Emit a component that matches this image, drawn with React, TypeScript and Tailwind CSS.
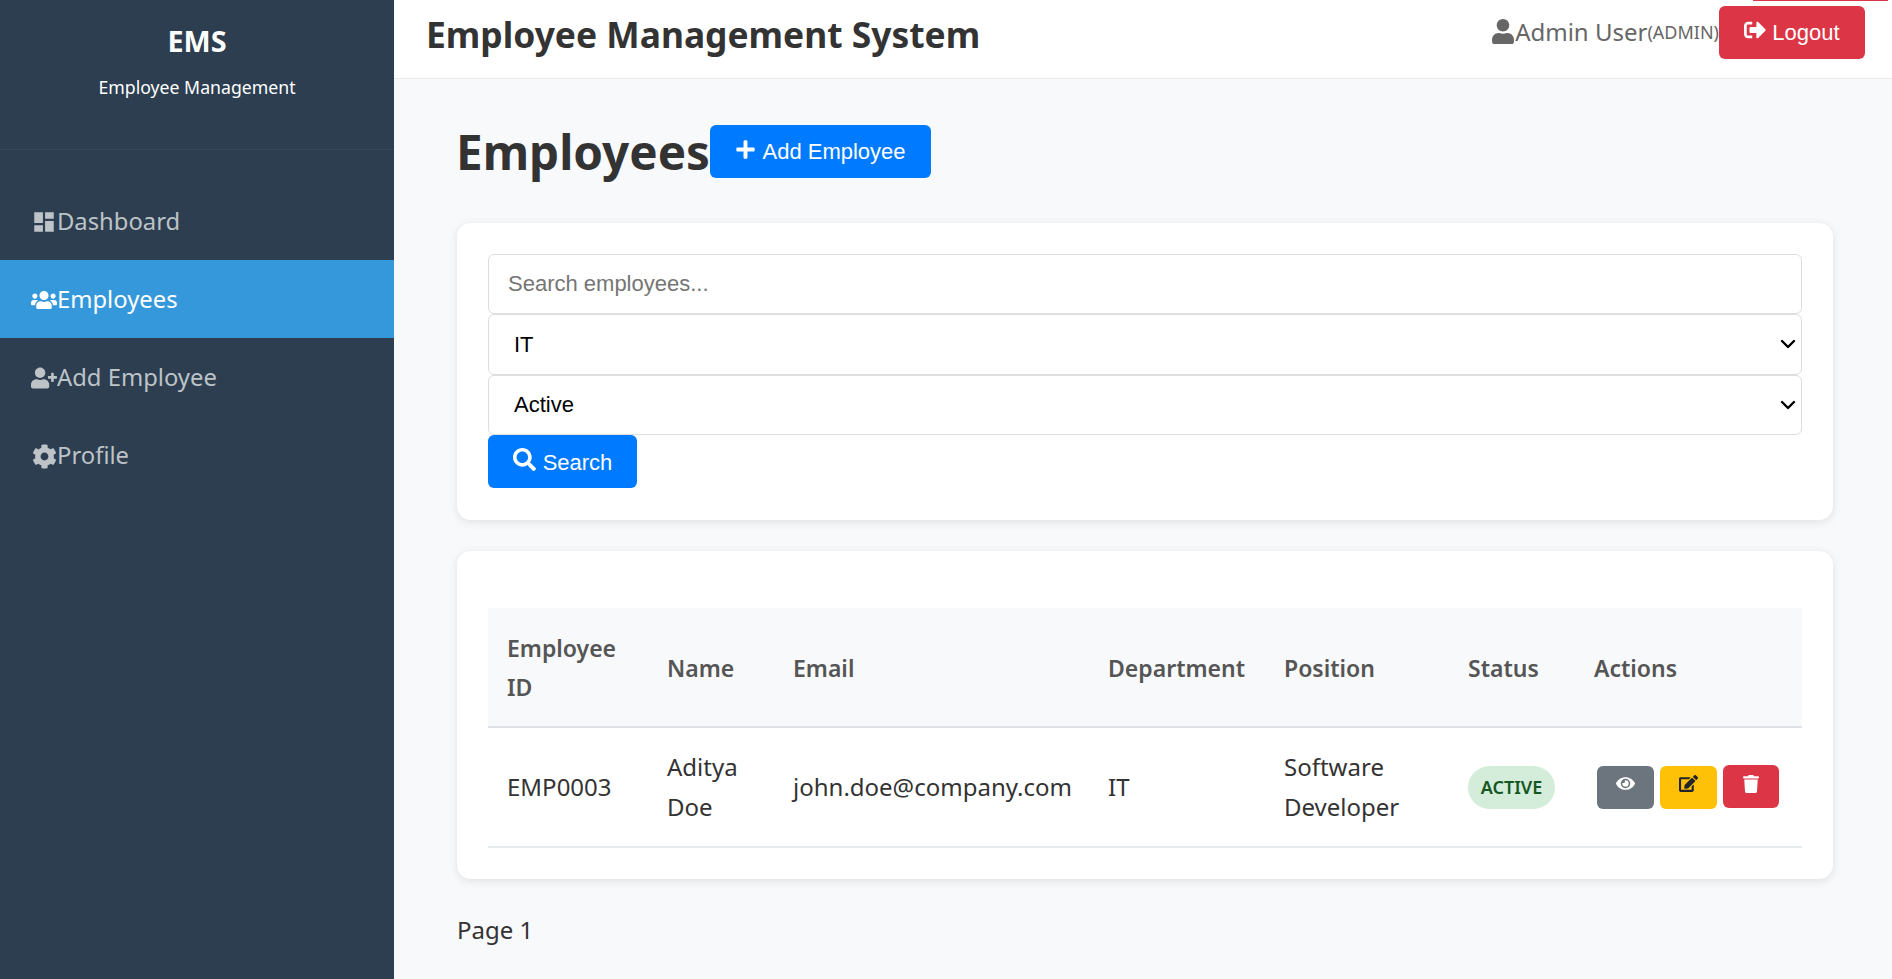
import React from "react";
import { ChevronDown } from "lucide-react";
import {
  FaCog,
  FaEdit,
  FaEye,
  FaPlus,
  FaSearch,
  FaSignOutAlt,
  FaTrash,
  FaUser,
  FaUserPlus,
  FaUsers,
} from "react-icons/fa";
import { MdDashboard } from "react-icons/md";

const navItems = [
  { label: "Dashboard", icon: <MdDashboard className="h-[26px] w-[26px]" /> },
  { label: "Employees", icon: <FaUsers className="h-[24px] w-[26px]" />, active: true },
  { label: "Add Employee", icon: <FaUserPlus className="h-[24px] w-[26px]" /> },
  { label: "Profile", icon: <FaCog className="h-[25px] w-[25px]" /> },
];

const headers = [
  { label: "Employee ID", width: "w-[160px]" },
  { label: "Name", width: "w-[126px]" },
  { label: "Email", width: "w-[315px]" },
  { label: "Department", width: "w-[176px]" },
  { label: "Position", width: "w-[184px]" },
  { label: "Status", width: "w-[126px]" },
  { label: "Actions", width: "w-[227px]" },
];

function Sidebar() {
  return (
    <aside className="flex w-[394px] flex-none flex-col bg-[#2c3e50]">
      <div className="h-[150px] flex-none border-b border-[#34495e] pt-[22px] text-center text-white">
        <h1 className="text-[28.8px] leading-[38px] font-bold">EMS</h1>
        <p className="mt-[15px] text-[17.7px] leading-[24px]">Employee Management</p>
      </div>
      <nav className="mt-[32px] flex flex-col">
        {navItems.map((item) => (
          <a
            key={item.label}
            className={`flex h-[78px] items-center pt-[2px] pl-[31px] text-[23.8px] ${
              item.active ? "bg-[#3498db] text-white" : "text-[#bdc3c7]"
            }`}
          >
            <span className="flex w-[26px] justify-center">{item.icon}</span>
            {item.label}
          </a>
        ))}
      </nav>
    </aside>
  );
}

function Header() {
  return (
    <header className="flex h-[79px] flex-none items-center justify-between border-b border-[#e9ecef] bg-white pr-[27px] pl-[32px]">
      <h2 className="-mt-[8px] text-[35.4px] font-bold text-[#333]">Employee Management System</h2>
      <div className="-mt-[14px] flex items-center text-[#666]">
        <FaUser className="-mt-[2px] h-[25px] w-[24px]" />
        <span className="text-[24px]">Admin User</span>
        <span className="text-[18px]">(ADMIN)</span>
        <button className="flex h-[53px] w-[146px] items-center justify-center gap-[6px] rounded-[6px] bg-[#dc3545] font-['Liberation_Sans',sans-serif] text-[22px] text-white">
          <FaSignOutAlt className="-mt-[4px] h-[22px] w-[22px]" />
          Logout
        </button>
      </div>
    </header>
  );
}

function FilterCard() {
  return (
    <section className="mb-[31px] rounded-[14px] bg-white px-[31px] pt-[31px] pb-[32px] shadow-[0_2px_10px_rgba(0,0,0,0.1)]">
      <div className="flex flex-col font-['Liberation_Sans',sans-serif] text-[22px]">
        <div className="flex h-[60px] items-center rounded-[6px] border-[1.5px] border-[#dedede] px-[19px] pb-[1px] text-[#757575]">
          Search employees...
        </div>
        <div className="flex h-[61px] items-center justify-between rounded-[6px] border-[1.5px] border-[#dedede] pr-[1px] pb-[1px] pl-[25px] text-black">
          IT
          <ChevronDown className="h-[24px] w-[24px]" strokeWidth={2.4} />
        </div>
        <div className="flex h-[60px] items-center justify-between rounded-[6px] border-[1.5px] border-[#dedede] pr-[1px] pb-[1px] pl-[25px] text-black">
          Active
          <ChevronDown className="h-[24px] w-[24px]" strokeWidth={2.4} />
        </div>
        <button className="flex h-[53px] w-[149px] items-center justify-center gap-[7px] rounded-[6px] bg-[#007bff] pt-[1px] text-white">
          <FaSearch className="-mt-[6px] h-[23px] w-[23px]" />
          Search
        </button>
      </div>
    </section>
  );
}

function EmployeeTable() {
  return (
    <section className="rounded-[14px] bg-white px-[31px] pt-[57px] pb-[31px] shadow-[0_2px_10px_rgba(0,0,0,0.1)]">
      <table className="w-full table-fixed border-collapse text-left text-[24px] text-[#333]">
        <thead>
          <tr className="h-[119px] border-b-2 border-[#dee2e6] bg-[#f8f9fa] text-[#555]">
            {headers.map((h) => (
              <th key={h.label} className={`${h.width} px-[19px] pt-[2px] text-[23px] leading-[39px] font-semibold`}>
                {h.label}
              </th>
            ))}
          </tr>
        </thead>
        <tbody>
          <tr className="h-[120px] border-b-2 border-[#e9ecef] leading-[40px]">
            <td className="px-[19px]">EMP0003</td>
            <td className="px-[19px]">Aditya Doe</td>
            <td className="px-[19px] whitespace-nowrap">john.doe@company.com</td>
            <td className="px-[19px]">IT</td>
            <td className="px-[19px]">Software Developer</td>
            <td className="px-[19px]">
              <span className="inline-flex h-[43px] w-[87px] items-center justify-center rounded-full bg-[#d4edda] text-[18px] font-semibold text-[#155724]">
                ACTIVE
              </span>
            </td>
            <td className="px-[19px]">
              <div className="flex items-start gap-[6px] pl-[3px]">
                <button className="flex h-[43px] w-[57px] justify-center rounded-[6px] bg-[#6c757d] pt-[8px] text-white">
                  <FaEye className="h-[19px] w-[19px]" />
                </button>
                <button className="flex h-[43px] w-[57px] justify-center rounded-[6px] bg-[#ffc107] pt-[8px] text-[#212529]">
                  <FaEdit className="h-[19px] w-[19px]" />
                </button>
                <button className="-mt-px flex h-[43px] w-[56px] justify-center rounded-[6px] bg-[#dc3545] pt-[10px] text-white">
                  <FaTrash className="h-[18px] w-[18px]" />
                </button>
              </div>
            </td>
          </tr>
        </tbody>
      </table>
    </section>
  );
}

export default function App() {
  return (
    <div className="flex h-[979px] w-full overflow-hidden bg-[#f8f9fa] font-['Noto_Sans',sans-serif]">
      <Sidebar />
      <main className="relative flex min-w-0 flex-1 flex-col">
        <div className="absolute top-0 right-[4px] h-px w-[135px] bg-[#dc3545]" />
        <Header />
        <div className="pt-[46px] pr-[59px] pl-[63px]">
          <div className="mb-[45px] flex items-center">
            <h1 className="-ml-px text-[47.6px] leading-[53px] font-bold text-[#333]">Employees</h1>
            <button className="flex h-[53px] w-[221px] items-center justify-center gap-[6px] rounded-[6px] bg-[#007bff] font-['Liberation_Sans',sans-serif] text-[22px] text-white">
              <FaPlus className="-mt-[5px] h-[21px] w-[21px]" />
              Add Employee
            </button>
          </div>
          <FilterCard />
          <EmployeeTable />
          <p className="mt-[33px] text-[24px] text-[#333]">Page 1</p>
        </div>
      </main>
    </div>
  );
}
